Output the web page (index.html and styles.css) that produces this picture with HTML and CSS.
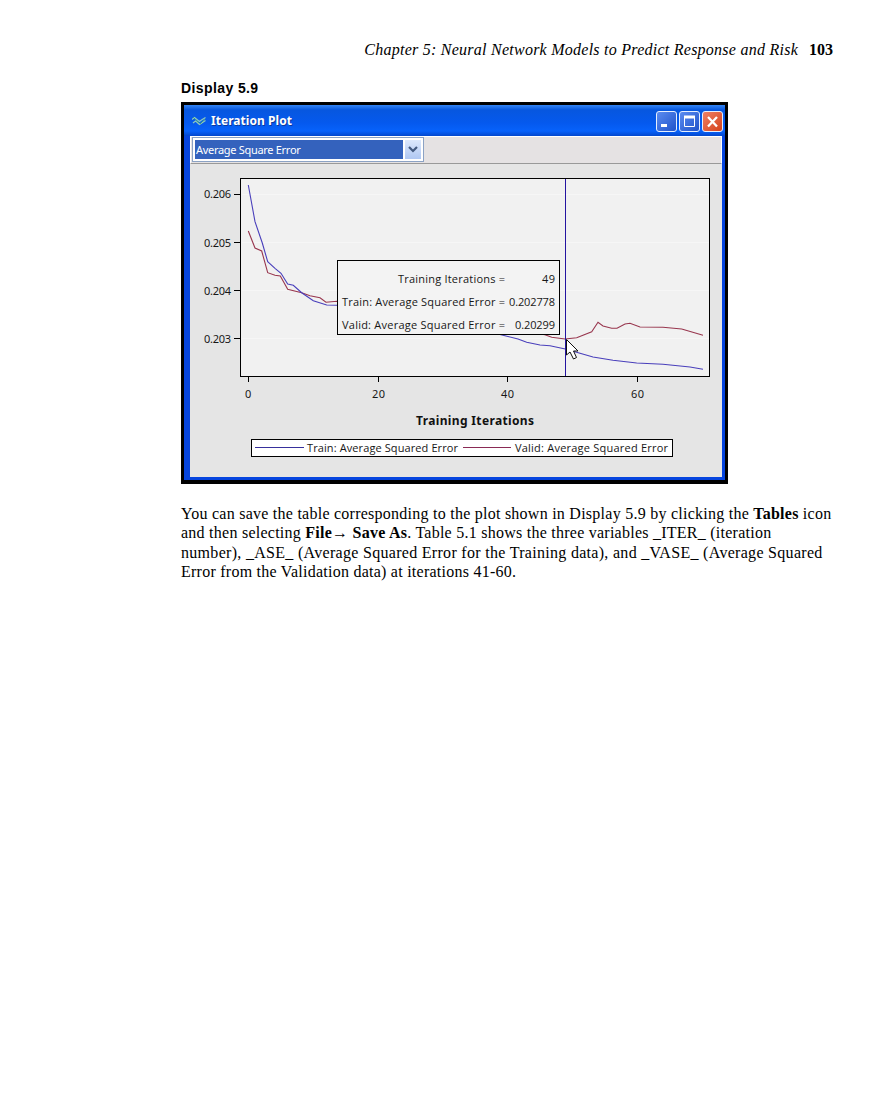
FILE: index.html
```html
<!DOCTYPE html>
<html lang="en">
<head>
<meta charset="utf-8">
<title>Chapter 5: Neural Network Models to Predict Response and Risk</title>
<link rel="stylesheet" href="styles.css">
</head>
<body>
<main class="page">
  <header class="running-head"><em class="chapter">Chapter 5: Neural Network Models to Predict Response and Risk</em><b class="folio">103</b></header>
  <h1 class="caption">Display 5.9</h1>
  <section class="window">
    <div class="titlebar">
      <svg class="app-icon" width="14" height="10" viewBox="0 0 14 10"><path d="M0 3.500l2.500-2 5 4 2-1.500 4-2.500M1 7l2.500-2 4 3.500 3-2 3-2" fill="none" stroke="#8fc9bd" stroke-width="1.200"/><path d="M1 1l6 6M8 8l5-5" stroke="#3f9c8a"/></svg>
      <span class="title">Iteration Plot</span>
      <div class="controls">
        <span class="btn"><svg width="19" height="19" viewBox="0 0 19 19"><path d="M4 13.500h6" stroke="#fff" stroke-width="3"/></svg></span>
        <span class="btn"><svg width="19" height="19" viewBox="0 0 19 19"><path d="M4.500 5v9.500h10V5" fill="none" stroke="#fff"/><path d="M4 5h11" stroke="#fff" stroke-width="3"/></svg></span>
        <span class="btn close"><svg width="19" height="19" viewBox="0 0 19 19"><path d="M5 5l9 9.500M14 5l-9 9.500" stroke="#fff" stroke-width="2.300"/></svg></span>
      </div>
    </div>
    <div class="client">
      <div class="toolbar">
        <div class="select"><span class="value">Average Square Error</span><span class="arrow"><svg width="16" height="19" viewBox="0 0 16 19"><path d="M4 7l4 4 4-4" fill="none" stroke="#42597f" stroke-width="2.200"/></svg></span></div>
      </div>
      <svg class="plot" width="532" height="313" viewBox="190 164 532 313">
        <rect x="240.500" y="178.500" width="469" height="198" fill="#f1f1f1" stroke="#000"/>
        <path d="M242 194.500H709M242 242.500H709M242 290.500H709M242 338.500H709" stroke="#f6f6f6"/>
        <path d="M234 194.500h6M234 242.500h6M234 290.500h6M234 338.500h6M248.500 377v5M378.500 377v5M507.500 377v5M637.500 377v5" stroke="#000"/>
        <g class="label">
          <text x="204" y="198" textLength="27">0.206</text>
          <text x="204" y="247" textLength="27">0.205</text>
          <text x="204" y="295" textLength="27">0.204</text>
          <text x="204" y="343" textLength="27">0.203</text>
          <text x="245" y="398">0</text>
          <text x="372" y="398" textLength="13">20</text>
          <text x="501" y="398" textLength="13">40</text>
          <text x="631" y="398" textLength="13">60</text>
        </g>
        <polyline class="valid" points="248.300,231 255,248 261.700,251 267.700,272.700 275,275.300 280.300,276 287.700,289.300 301.700,292.700 310,295.700 320,297.700 326,302.300 337,301.300 400,312 500,328 545,334.700 551.700,337.300 565,339 576.700,337.700 591.700,331.700 598,322.300 603,326 611.700,328.300 617,328.300 625,324 630,323.300 640,327 663,327.300 681.700,329 703,335.300"/>
        <polyline class="train" points="248.300,185 255,221.700 262.300,243 267.700,261.700 275,268.300 281,273.300 287.700,284 293.300,285.300 301.700,292.700 313.300,300.700 326.700,305 337,305.300 400,312 470,327 505,335.700 518,339 526.700,342.300 540,345 550,345.700 565.300,349 580,353.300 593,357 613,360.300 636.700,363 663,364.300 690,367 703,369.300"/>
        <rect x="565" y="179" width="1" height="197" fill="#2414a0"/>
        <rect x="337.500" y="260.500" width="222" height="74" fill="#f3f3f3" stroke="#000"/>
        <g class="label wide">
          <text x="398" y="283" textLength="107">Training Iterations =</text>
          <text x="542" y="283" textLength="13">49</text>
          <text x="342" y="306" textLength="163">Train: Average Squared Error =</text>
          <text x="509" y="306" textLength="46">0.202778</text>
          <text x="342" y="329" textLength="163">Valid: Average Squared Error =</text>
          <text x="515" y="329" textLength="40">0.20299</text>
        </g>
        <path d="M566.500 339.500v15.500l3.500-3 3.500 7 3-1.500-3-6.500h4.500z" fill="#fff" stroke="#111"/>
        <text class="axis-title" x="416" y="425" textLength="118">Training Iterations</text>
        <rect x="251.500" y="439.500" width="421" height="17" fill="#fff" stroke="#000"/>
        <rect x="255" y="447" width="49" height="1" fill="#37309c"/>
        <rect x="463" y="447" width="48" height="1" fill="#8a2a55"/>
        <g class="label wide">
          <text x="307" y="452" textLength="151">Train: Average Squared Error</text>
          <text x="515" y="452" textLength="153">Valid: Average Squared Error</text>
        </g>
      </svg>
    </div>
  </section>
  <p class="prose">
    <span class="line l1">You can save the table corresponding to the plot shown in Display 5.9 by clicking the <b>Tables</b> icon</span>
    <span class="line l2">and then selecting <b>File</b>→ <b>Save As</b>. Table 5.1 shows the three variables _ITER_ (iteration</span>
    <span class="line l3">number), _ASE_ (Average Squared Error for the Training data), and _VASE_ (Average Squared</span>
    <span class="line l4">Error from the Validation data) at iterations 41-60.</span>
  </p>
</main>
</body>
</html>
```
FILE: styles.css
```css
* { box-sizing: border-box; }
body { margin: 0; background: #fff; color: #000; }
.page { width: 893px; height: 1110px; padding: 40px 60px 0 181px; font-family: "Liberation Serif", serif; }
.running-head { display: flex; justify-content: flex-end; gap: 11px; height: 20px; font-size: 16px; line-height: 20px; white-space: nowrap; }
.chapter { letter-spacing: 0.25px; }
.caption { margin: 19px 0 5px; height: 18px; font: bold 14px/18px "Liberation Sans", sans-serif; letter-spacing: 0.4px; }
.window { width: 547px; height: 382px; padding: 3px 3px 4px; background: #000; }
.titlebar { display: flex; align-items: center; height: 31px; padding: 1px 2px 0 8px; background: linear-gradient(#3484f2 0, #0757df 5px, #0559ee 18px, #0762fb 26px, #0347cd 100%); }
.app-icon { margin-right: 5px; }
.title { flex: 1; color: #fff; font: bold 12px/20px "Noto Sans", sans-serif; letter-spacing: 0.05px; text-shadow: 1px 1px #0b3a9d; }
.controls { display: flex; gap: 2px; }
.btn { display: block; width: 21px; height: 21px; border: 1px solid #e6effd; border-radius: 3px; background: linear-gradient(135deg, #5b8cf0, #1f52ca); }
.btn svg { display: block; }
.close { background: linear-gradient(135deg, #ee8065, #d5421b); }
.client { height: 344px; border: solid #0645df; border-width: 0 3px 3px 6px; background: #e5e5e5; }
.toolbar { height: 28px; padding: 0 0 0 1px; border: 1px solid #fff; border-bottom-color: #999; background: #e5e2e3; }
.select { display: flex; width: 232px; height: 25px; padding: 2px; border: 1px solid #8ba2c4; background: #fff; }
.value { flex: 1; background: #3462bd; color: #fff; padding-left: 1px; font: 11px/20px "Noto Sans", sans-serif; letter-spacing: -0.3px; }
.arrow { width: 16px; margin-left: 2px; background: linear-gradient(#dce8fd, #afc7f2); }
.plot { display: block; }
.label { font: 11px "Noto Sans", sans-serif; fill: #171717; }
.wide { font-family: "Open Sans", sans-serif; }
.axis-title { font: bold 12px "Noto Sans", sans-serif; fill: #111; }
.train { fill: none; stroke: #493fbb; stroke-width: 1.1; }
.valid { fill: none; stroke: #98364e; stroke-width: 1.1; }
.prose { margin: 20px 0 0; font-size: 16px; line-height: 19.4px; }
.line { display: block; white-space: nowrap; letter-spacing: 0.25px; }
.l3 { letter-spacing: 0.3px; }
```
